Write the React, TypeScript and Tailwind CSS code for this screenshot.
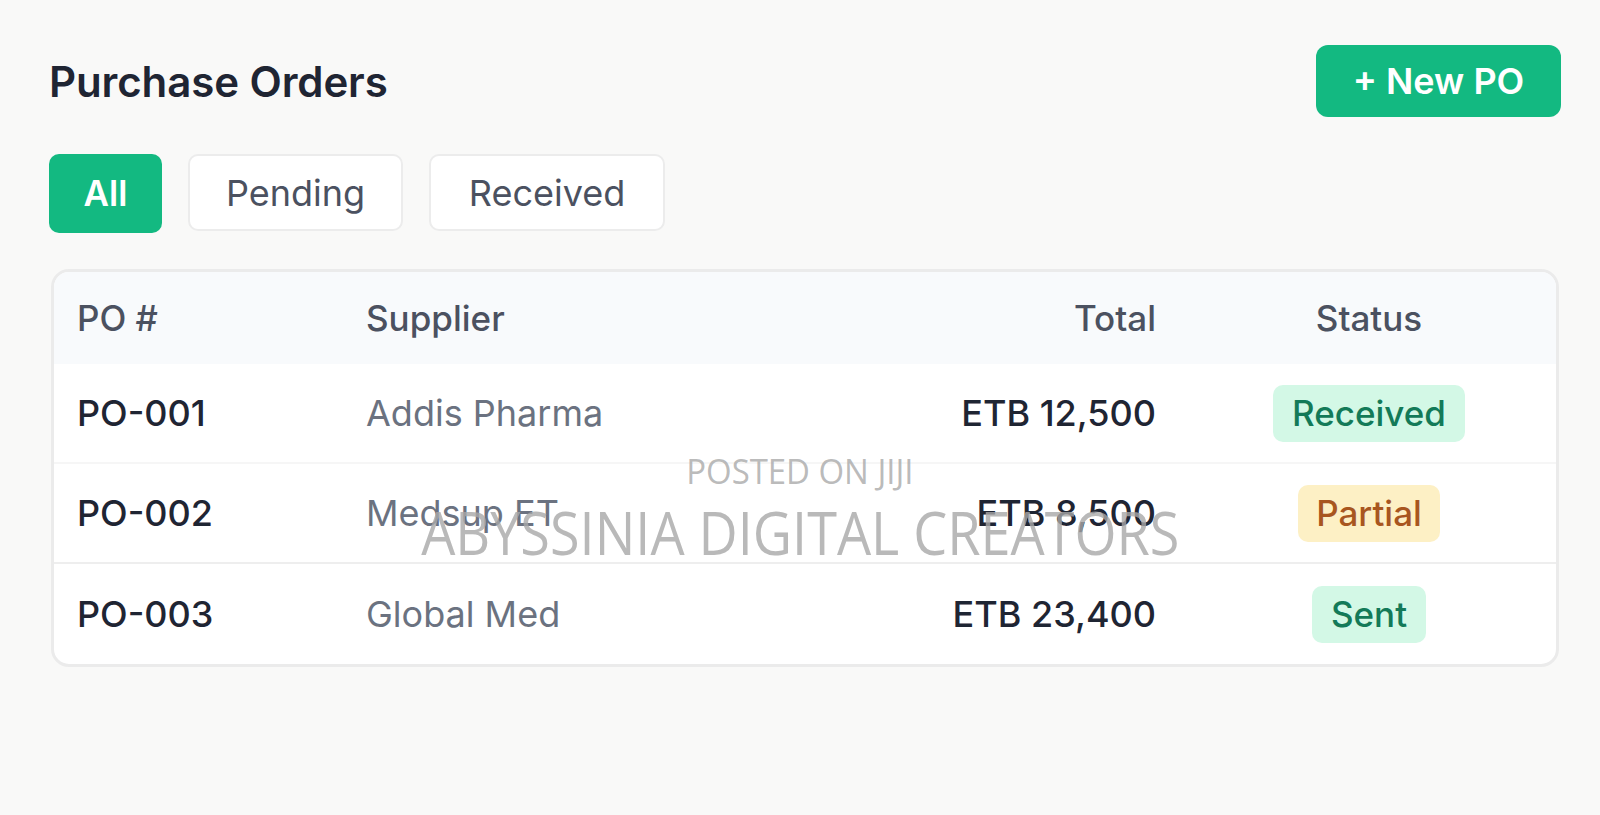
import React from "react";

const rows = [
  { id: "PO-001", supplier: "Addis Pharma", total: "ETB 12,500", status: "Received" },
  { id: "PO-002", supplier: "Medsup ET", total: "ETB 8,500", status: "Partial" },
  { id: "PO-003", supplier: "Global Med", total: "ETB 23,400", status: "Sent" },
];

function Badge({ status }: { status: string }) {
  if (status === "Partial") {
    return (
      <span className="inline-block rounded-[10px] bg-[#fdf0c5] px-[18px] py-[8px] text-[35px] leading-[41px] font-medium text-[#a8561f]">
        {status}
      </span>
    );
  }
  return (
    <span className="inline-block rounded-[10px] bg-[#d3f8e6] px-[19px] py-[8px] text-[35px] leading-[41px] font-medium text-[#137a58]">
      {status}
    </span>
  );
}

export default function App() {
  return (
    <div
      className="relative h-[815px] w-full overflow-hidden bg-[#f9f9f8] pl-[49px] pr-[39px] pt-[45px]"
      style={{ fontFamily: "Inter, 'Noto Sans', sans-serif" }}
    >
      <div className="flex h-[72px] items-center justify-between">
        <h1 className="text-[42px] font-semibold tracking-[-0.1px] text-[#1f2533]">Purchase Orders</h1>
        <button className="flex h-[72px] w-[245px] items-center justify-center rounded-[12px] bg-[#13b981] text-[36px] font-semibold text-white">
          + New PO
        </button>
      </div>

      <div className="mt-[37px] flex gap-[26px]">
        <button className="h-[79px] w-[113px] rounded-[10px] bg-[#13b981] text-[35px] font-semibold text-white">All</button>
        <button className="h-[77px] w-[215px] rounded-[10px] border-2 border-[#ececec] bg-white text-[36px] text-[#4b5160]">
          Pending
        </button>
        <button className="h-[77px] w-[236px] rounded-[10px] border-2 border-[#ececec] bg-white text-[36px] text-[#4b5160]">
          Received
        </button>
      </div>

      <div className="ml-[2px] mr-[2px] mt-[36px] overflow-hidden rounded-[18px] border-[3px] border-[#ebebeb] bg-white">
        <div className="grid h-[92px] grid-cols-[289px_1fr_300px_400px] items-center bg-[#f8fafc] pl-[23px] text-[35px] font-medium text-[#4b5160]">
          <div>PO #</div>
          <div>Supplier</div>
          <div className="text-right">Total</div>
          <div className="pl-[26px] text-center">Status</div>
        </div>
        {rows.map((r, i) => (
          <div
            key={r.id}
            className={
              "grid h-[100px] grid-cols-[289px_1fr_300px_400px] items-center pl-[23px] text-[36px] " +
              (i === 0 ? "border-b-2 border-[#f6f6f6]" : i === 1 ? "border-b-2 border-[#eeeeee]" : "")
            }
          >
            <div className="whitespace-nowrap font-medium text-[#1f2533]">{r.id}</div>
            <div className="whitespace-nowrap text-[#6b7280]">{r.supplier}</div>
            <div className="whitespace-nowrap text-right font-medium text-[#1f2533]">{r.total}</div>
            <div className="pl-[26px] text-center">
              <Badge status={r.status} />
            </div>
          </div>
        ))}
      </div>

      <div
        className="pointer-events-none absolute left-0 top-[446px] flex w-full flex-col items-center text-[#a8a8a8]/80"
        style={{ fontFamily: "'Open Sans', 'Noto Sans', sans-serif" }}
      >
        <div className="origin-center scale-x-[0.94] text-[35px] leading-[50px]">POSTED ON JIJI</div>
        <div className="mt-[1px] origin-center scale-x-[0.9] text-[60px] leading-[70px]">ABYSSINIA DIGITAL CREATORS</div>
      </div>
    </div>
  );
}
